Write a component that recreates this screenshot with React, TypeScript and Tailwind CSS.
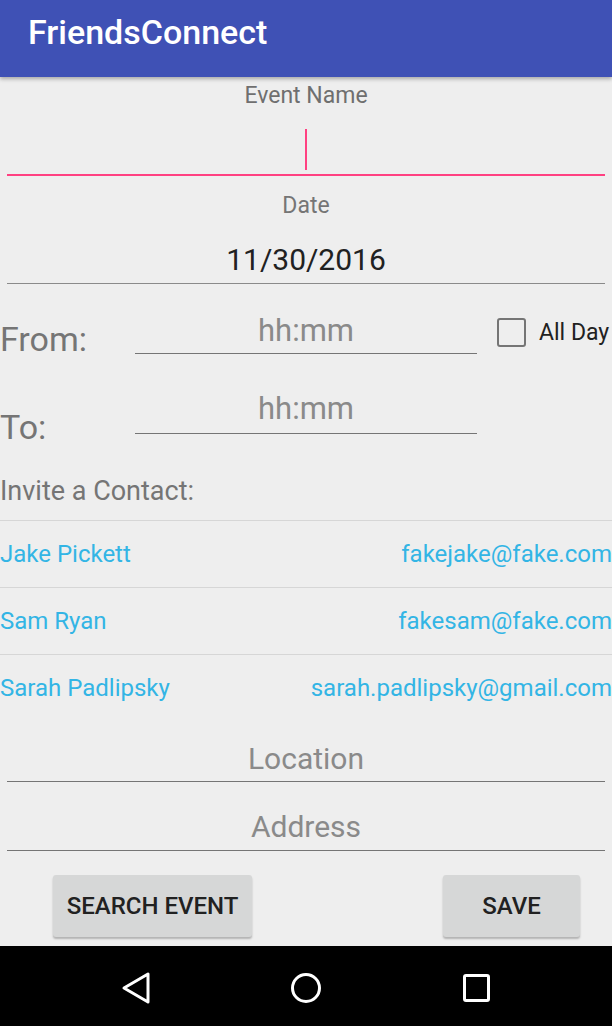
const contacts = [
  { name: 'Jake Pickett', email: 'fakejake@fake.com' },
  { name: 'Sam Ryan', email: 'fakesam@fake.com' },
  { name: 'Sarah Padlipsky', email: 'sarah.padlipsky@gmail.com' },
]

export default function App() {
  return (
    <div className="w-[612px] h-[1026px] flex flex-col bg-[#EEEEEE] overflow-hidden" style={{ fontFamily: 'Roboto, "Noto Sans", sans-serif' }}>
      {/* App bar */}
      <header className="relative z-10 h-[77px] shrink-0 bg-[#3F51B5] pl-[28px] pt-[12px] shadow-[0_2px_4px_rgba(0,0,0,0.3)]">
        <h1 className="text-white text-[34px] leading-[40px] font-medium">FriendsConnect</h1>
      </header>

      <main className="h-[869px] shrink-0 flex flex-col">
        {/* Event name */}
        <p className="mt-[6px] text-center text-[#6F6F6F] text-[23px] leading-[26px]">Event Name</p>
        <div className="mx-[7px] h-[67px] border-b-2 border-[#FF4081] flex justify-center items-end pb-[4px]">
          <span className="w-[2px] h-[41px] bg-[#FF4081]" />
        </div>

        {/* Date */}
        <p className="mt-[17px] text-center text-[#757575] text-[23px] leading-[26px]">Date</p>
        <div className="mx-[7px] pt-[24px] pb-[6px] border-b border-[#8A8A8A] text-center text-[#212121] text-[30px] leading-[34px]">
          11/30/2016
        </div>

        {/* From */}
        <div className="flex items-start">
          <span className="mt-[35px] w-[135px] text-[#757575] text-[34px] leading-[40px]">From:</span>
          <div className="mt-[30px] w-[342px] pb-[5px] border-b border-[#757575] text-center text-[#8A8A8A] text-[31px] leading-[34px]">hh:mm</div>
          <span className="mt-[34px] ml-[20px] w-[29px] h-[29px] border-2 border-[#757575] rounded-[3px]" />
          <span className="mt-[36px] ml-[13px] text-[#212121] text-[23px] leading-[26px] whitespace-nowrap">All Day</span>
        </div>

        {/* To */}
        <div className="flex items-start">
          <span className="mt-[48px] w-[135px] text-[#757575] text-[34px] leading-[40px]">To:</span>
          <div className="mt-[33px] w-[342px] pb-[7px] border-b border-[#757575] text-center text-[#8A8A8A] text-[31px] leading-[34px]">hh:mm</div>
        </div>

        {/* Invite */}
        <p className="mt-[30px] text-[#757575] text-[27px] leading-[28px]">Invite a Contact:</p>
        <div className="mt-[15px] flex flex-col">
          {contacts.map(c => (
            <div key={c.name} className="h-[67px] border-t border-[#D6D6D6] flex items-center justify-between text-[#33B5E5] text-[24px]">
              <span>{c.name}</span>
              <span>{c.email}</span>
            </div>
          ))}
        </div>

        {/* Location / Address */}
        <div className="mx-[7px] mt-[21px] pb-[5px] border-b border-[#757575] text-center text-[#8A8A8A] text-[30px] leading-[34px]">Location</div>
        <div className="mx-[7px] mt-[28px] pb-[6px] border-b border-[#757575] text-center text-[#8A8A8A] text-[30px] leading-[34px]">Address</div>

        {/* Buttons */}
        <div className="mt-[24px] flex justify-between pl-[53px] pr-[32px]">
          <button className="w-[199px] h-[62px] bg-[#D6D7D7] rounded-[3px] shadow-[0_2px_2px_rgba(0,0,0,0.25)] text-[#212121] text-[24px] font-medium">SEARCH EVENT</button>
          <button className="w-[137px] h-[62px] bg-[#D6D7D7] rounded-[3px] shadow-[0_2px_2px_rgba(0,0,0,0.25)] text-[#212121] text-[24px] font-medium">SAVE</button>
        </div>
      </main>

      {/* Nav bar */}
      <nav className="h-[80px] shrink-0 bg-black relative">
        <svg width="612" height="80" viewBox="0 0 612 80" fill="none" stroke="white" strokeWidth="3" strokeLinejoin="round">
          <path d="M148 28 L148 56 L124 42 Z" />
          <circle cx="306" cy="42" r="13.5" />
          <rect x="464.5" y="29.5" width="24" height="25" rx="1.5" />
        </svg>
      </nav>
    </div>
  )
}
